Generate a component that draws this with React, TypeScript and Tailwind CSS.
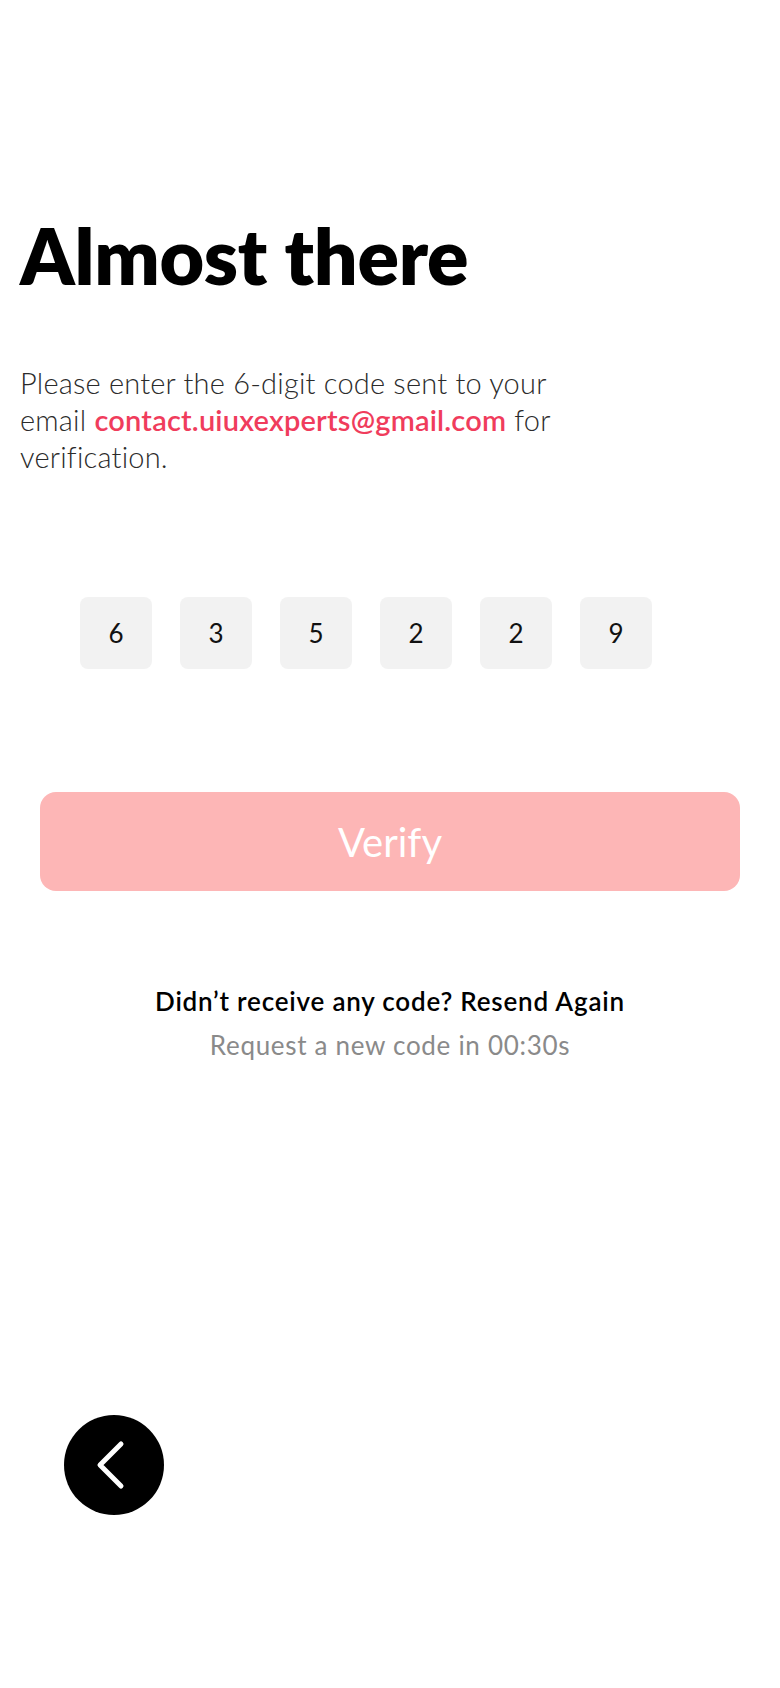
const digits = ["6", "3", "5", "2", "2", "9"];

export default function App() {
  return (
    <div className="min-h-[1688px] w-full bg-white font-['Lato',sans-serif] text-black flex flex-col">
      {/* Header */}
      <div className="px-5 pt-[210px]">
        <h1 className="text-[77px] leading-[90px] font-extrabold tracking-[-0.3px]">Almost there</h1>
        <p className="mt-[64px] w-[580px] text-[29px] leading-[37px] text-[#2b2b2b] font-light tracking-[0.2px]">
          Please enter the 6-digit code sent to your email{" "}
          <span className="text-[#f03c5c] font-semibold">contact.uiuxexperts@gmail.com</span> for verification.
        </p>
      </div>

      {/* Code boxes */}
      <div className="mt-[122px] ml-[80px] flex gap-[28px]">
        {digits.map((d, i) => (
          <div
            key={i}
            className="w-[72px] h-[72px] rounded-[8px] bg-[#f2f2f2] flex items-center justify-center text-[26px] text-[#111]"
          >
            {d}
          </div>
        ))}
      </div>

      {/* Verify */}
      <div className="px-10 mt-[123px]">
        <button
          type="button"
          className="w-full h-[99px] rounded-[16px] bg-[#fdb6b6] text-white text-[40px] flex items-center justify-center"
        >
          Verify
        </button>
      </div>

      {/* Resend */}
      <div className="mt-[94px] flex flex-col items-center gap-[12px]">
        <p className="text-[26px] leading-[32px] font-semibold tracking-[0.8px]">Didn’t receive any code? Resend Again</p>
        <p className="text-[26px] leading-[32px] text-[#8a8a8a] tracking-[0.7px]">Request a new code in 00:30s</p>
      </div>

      {/* Back */}
      <div className="mt-auto mb-[173px] ml-[64px]">
        <button
          type="button"
          className="w-[100px] h-[100px] rounded-full bg-black flex items-center justify-center"
        >
          <svg width="40" height="52" viewBox="0 0 40 52" fill="none" className="-ml-[6px]">
            <polyline
              points="30,5 9,26 30,47"
              stroke="white"
              strokeWidth="5"
              strokeLinecap="round"
              strokeLinejoin="round"
            />
          </svg>
        </button>
      </div>
    </div>
  );
}
